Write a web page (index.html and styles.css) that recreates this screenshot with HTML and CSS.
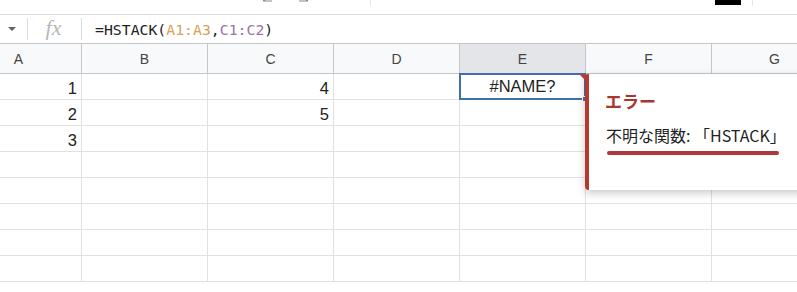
FILE: index.html
```html
<!DOCTYPE html>
<html lang="ja">
<head>
  <meta charset="UTF-8">
  <title>HSTACK</title>
  <link rel="stylesheet" href="styles.css">
</head>
<body>
  <div class="toolbar">
    <svg class="undo" width="12" height="6" viewBox="0 0 12 6"><path d="M1 2h9M1 2l3-2" stroke="#8a8a8a" stroke-width="1.2" fill="none"/></svg>
    <svg class="redo" width="12" height="6" viewBox="0 0 12 6"><path d="M11 2H2M11 2L8 0" stroke="#8a8a8a" stroke-width="1.2" fill="none"/></svg>
    <span class="tb-sep sep1"></span>
    <span class="tb-black"></span>
    <span class="tb-sep sep2"></span>
  </div>

  <div class="formula-bar">
    <div class="name-box"><span class="caret"></span></div>
    <div class="fx">fx</div>
    <div class="formula">=HSTACK(<span class="ref-a">A1:A3</span>,<span class="ref-c">C1:C2</span>)</div>
  </div>

  <div class="sheet">
    <div class="grid">
      <div class="head">A</div>
      <div class="head">B</div>
      <div class="head">C</div>
      <div class="head">D</div>
      <div class="head active">E</div>
      <div class="head">F</div>
      <div class="head">G</div>

      <div class="cell num">1</div><div class="cell"></div><div class="cell num">4</div><div class="cell"></div>
      <div class="cell selected">#NAME?<span class="err-mark"></span><span class="handle"></span></div><div class="cell"></div><div class="cell"></div>

      <div class="cell num">2</div><div class="cell"></div><div class="cell num">5</div><div class="cell"></div><div class="cell"></div><div class="cell"></div><div class="cell"></div>
      <div class="cell num">3</div><div class="cell"></div><div class="cell"></div><div class="cell"></div><div class="cell"></div><div class="cell"></div><div class="cell"></div>
      <div class="cell"></div><div class="cell"></div><div class="cell"></div><div class="cell"></div><div class="cell"></div><div class="cell"></div><div class="cell"></div>
      <div class="cell"></div><div class="cell"></div><div class="cell"></div><div class="cell"></div><div class="cell"></div><div class="cell"></div><div class="cell"></div>
      <div class="cell"></div><div class="cell"></div><div class="cell"></div><div class="cell"></div><div class="cell"></div><div class="cell"></div><div class="cell"></div>
      <div class="cell"></div><div class="cell"></div><div class="cell"></div><div class="cell"></div><div class="cell"></div><div class="cell"></div><div class="cell"></div>
      <div class="cell"></div><div class="cell"></div><div class="cell"></div><div class="cell"></div><div class="cell"></div><div class="cell"></div><div class="cell"></div>
    </div>

    <!-- エラーのツールチップ -->
    <div class="tooltip">
      <div class="tip-title">エラー</div>
      <div class="tip-text">不明な関数: 「HSTACK」</div>
      <div class="tip-line"></div>
    </div>
  </div>
</body>
</html>
```

FILE: styles.css
```css
* {
  margin: 0;
  padding: 0;
  box-sizing: border-box;
}
html, body {
  height: 100%;
}
body {
  font-family: 'Liberation Sans', Arial, sans-serif;
  background-color: #ffffff;
  color: #222;
  overflow: hidden;
}

/* Barra superior (recortada) */
.toolbar {
  position: relative;
  height: 15px;
  border-bottom: 1px solid #dcdcdc;
}
.undo, .redo {
  position: absolute;
  top: -1px;
}
.undo { left: 262px; }
.redo { left: 297px; }
.tb-sep {
  position: absolute;
  top: 0;
  width: 1px;
  height: 6px;
  background-color: #e6e6e6;
}
.sep1 { left: 370px; }
.sep2 { left: 752px; }
.tb-black {
  position: absolute;
  left: 715px;
  top: 0;
  width: 26px;
  height: 5px;
  background-color: #000;
}

/* Barra de fórmula */
.formula-bar {
  display: flex;
  align-items: center;
  height: 29px;
  border-bottom: 1px solid #c4c7c5;
}
.name-box {
  width: 28px;
  height: 22px;
  border-right: 1px solid #dadce0;
  display: flex;
  align-items: center;
  justify-content: center;
}
.caret {
  width: 0;
  height: 0;
  border-left: 4px solid transparent;
  border-right: 4px solid transparent;
  border-top: 4px solid #5f6368;
  margin-left: -3px;
}
.fx {
  width: 54px;
  height: 22px;
  border-right: 1px solid #dadce0;
  font-family: 'Liberation Serif', serif;
  font-style: italic;
  font-size: 22px;
  line-height: 20px;
  color: #b8b8b8;
  text-align: center;
  padding-right: 2px;
}
.formula {
  padding-left: 13px;
  font-family: 'DejaVu Sans Mono', monospace;
  font-size: 14.8px;
  color: #222;
}
.ref-a { color: #d9a15a; }
.ref-c { color: #9a74a8; }

/* Planilha */
.sheet {
  position: relative;
  overflow: hidden;
  height: 247px;
}
.grid {
  display: grid;
  grid-template-columns: repeat(7, 126px);
  grid-template-rows: 30px;
  grid-auto-rows: 26px;
  margin-left: -44px;
}
.head {
  background-color: #f8f9fa;
  border-right: 1px solid #c4c7c5;
  border-bottom: 1px solid #c4c7c5;
  color: #444;
  font-size: 14px;
  display: flex;
  align-items: center;
  justify-content: center;
  padding-top: 1px;
}
.head.active {
  background-color: #e3e5e8;
}
.cell {
  position: relative;
  border-right: 1px solid #e1e1e1;
  border-bottom: 1px solid #e1e1e1;
  font-size: 16.5px;
  line-height: 24px;
  padding: 2px 4px 0;
}
.num {
  text-align: right;
}
.selected {
  text-align: center;
  border: 2px solid #3c70ae;
  margin-top: -1px;
  margin-left: -1px;
  padding-top: 0;
  line-height: 23px;
  height: 27px;
}
.err-mark {
  position: absolute;
  right: -2px;
  top: -1px;
  width: 0;
  height: 0;
  border-left: 7px solid transparent;
  border-top: 7px solid #a8484c;
}
.handle {
  position: absolute;
  right: -4px;
  bottom: -4px;
  width: 6px;
  height: 6px;
  background-color: #3c70ae;
  border: 1px solid #fff;
}

/* Tooltip de erro */
.tooltip {
  position: absolute;
  left: 585px;
  top: 30px;
  width: 240px;
  height: 116px;
  background-color: #fff;
  border-left: 4px solid #b8382f;
  border-radius: 3px 0 0 4px;
  box-shadow: 0 3px 8px rgba(0, 0, 0, 0.22);
  padding: 17px 0 0 16px;
}
.tip-title {
  color: #a8382f;
  font-family: 'Noto Sans CJK JP', sans-serif;
  font-weight: 700;
  font-size: 17px;
  line-height: 20px;
}
.tip-text {
  margin-top: 13px;
  color: #222;
  font-family: 'Noto Sans CJK JP', sans-serif;
  font-size: 16px;
  line-height: 22px;
  padding-left: 1px;
}
.tip-line {
  margin-top: 5px;
  margin-left: 2px;
  width: 172px;
  height: 4px;
  border-radius: 2px;
  background-color: #b0373c;
}
```
